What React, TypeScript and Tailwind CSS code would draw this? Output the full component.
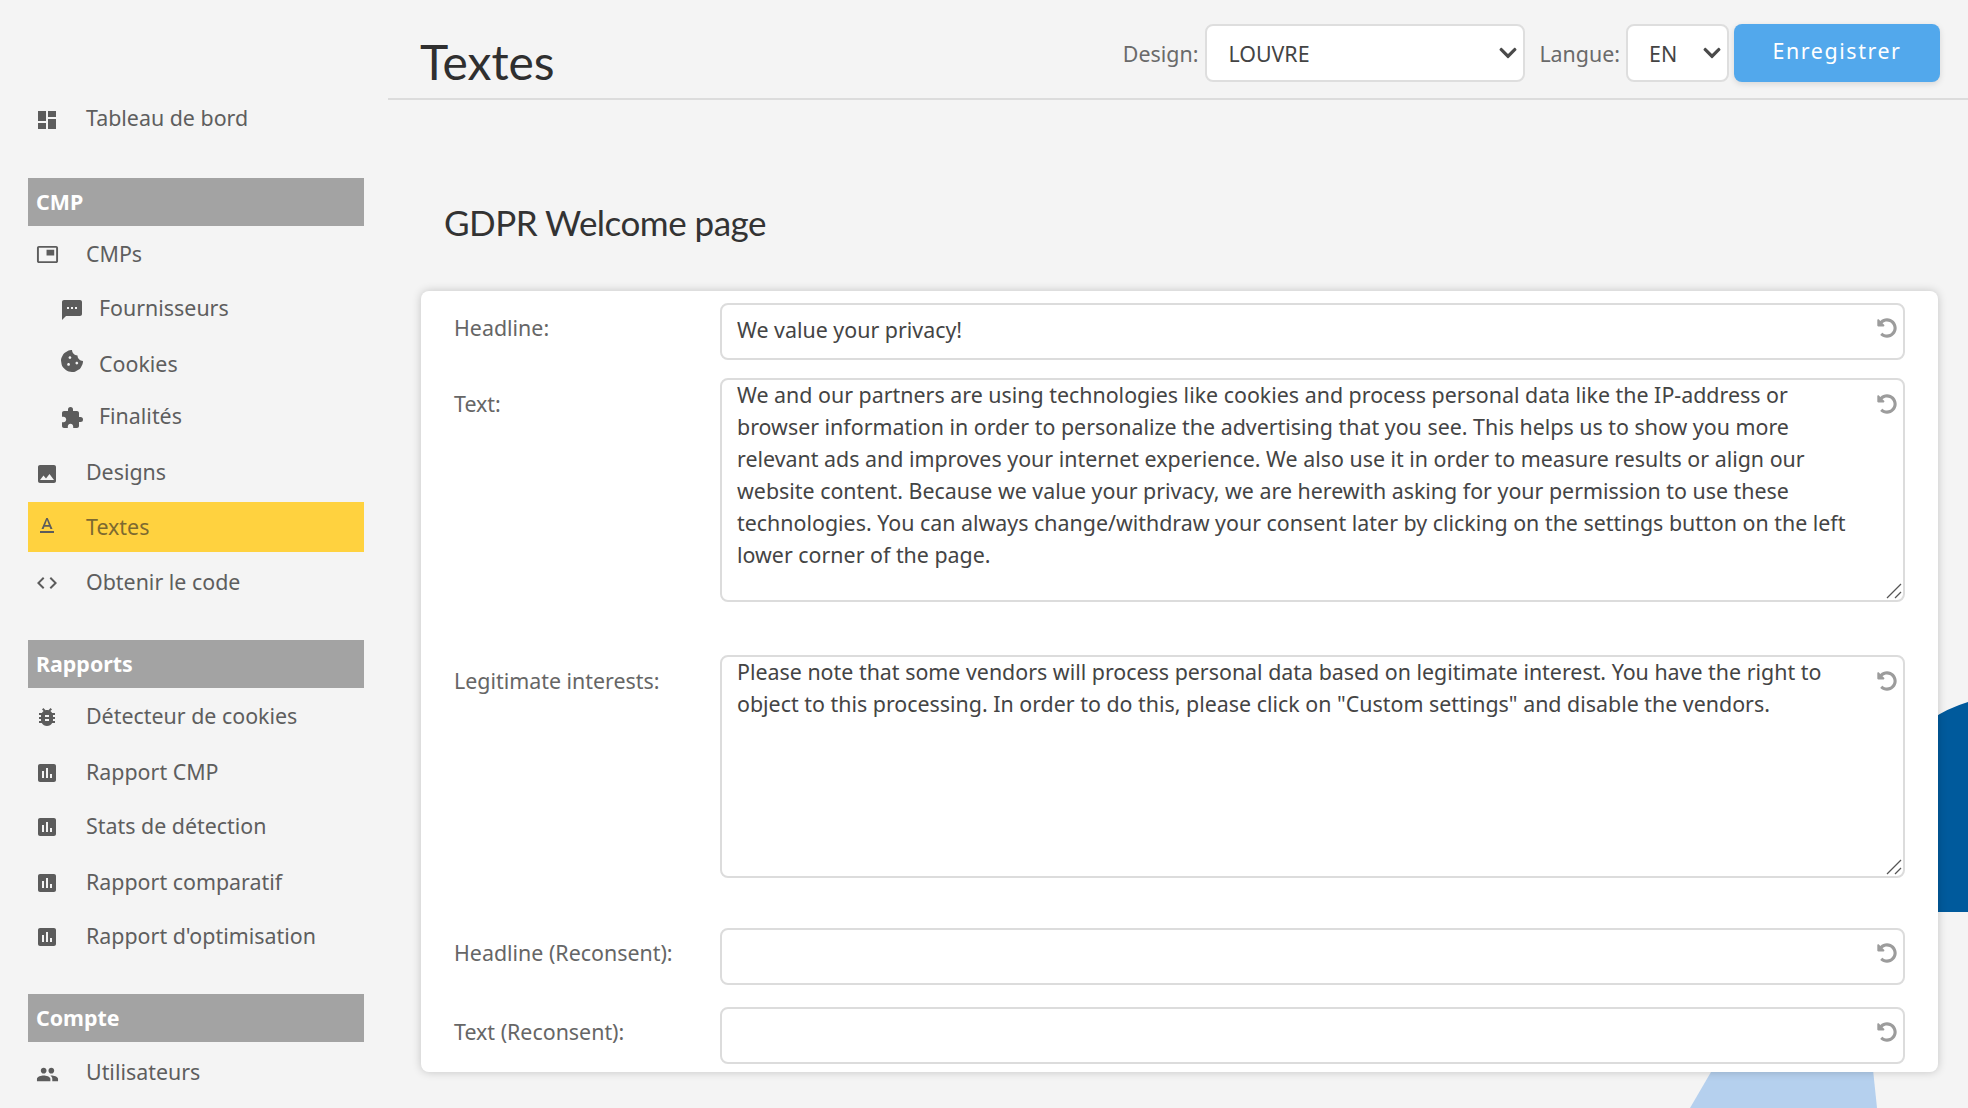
import React from 'react'
import { FaChevronDown, FaCookieBite, FaUndoAlt } from 'react-icons/fa'
import {
  MdAssessment,
  MdBugReport,
  MdCode,
  MdDashboard,
  MdExtension,
  MdImage,
  MdPeople,
  MdPictureInPicture,
  MdSms,
  MdTextFormat,
} from 'react-icons/md'

const TEXT_BODY =
  'We and our partners are using technologies like cookies and process personal data like the IP-address or browser information in order to personalize the advertising that you see. This helps us to show you more relevant ads and improves your internet experience. We also use it in order to measure results or align our website content. Because we value your privacy, we are herewith asking for your permission to use these technologies. You can always change/withdraw your consent later by clicking on the settings button on the left lower corner of the page.'
const LEGIT_BODY =
  'Please note that some vendors will process personal data based on legitimate interest. You have the right to object to this processing. In order to do this, please click on "Custom settings" and disable the vendors.'

function NavItem({ icon, label, sub, active, className }: { icon: React.ReactNode; label: string; sub?: boolean; active?: boolean; className?: string }) {
  return (
    <div className={`flex h-[50px] items-center ${active ? 'bg-[#ffd23f]' : ''} ${sub ? 'pl-[26px]' : 'pl-[6px]'} ${className ?? ''}`}>
      <span className={`flex items-center justify-center pt-[4px] text-[#5c5c5c] ${sub ? 'w-[35px]' : 'w-[26px]'}`}>{icon}</span>
      <span className={`text-[21.4px] ${sub ? 'ml-[10px]' : 'ml-[26px]'} ${active ? 'text-[#7d6a30]' : 'text-[#5e5e5e]'}`}>{label}</span>
    </div>
  )
}

function SectionHead({ label, className }: { label: string; className?: string }) {
  return <div className={`flex h-[48px] items-center bg-[#a3a3a3] pl-[8px] text-[21.4px] font-bold text-white ${className ?? ''}`}>{label}</div>
}

function Sidebar() {
  return (
    <aside className="w-[388px] shrink-0 pl-[28px] pr-[24px] pt-[93px]">
      <NavItem icon={<MdDashboard size={24} />} label="Tableau de bord" />
      <SectionHead label="CMP" className="mt-[35px]" />
      <NavItem icon={<MdPictureInPicture size={23} className="-mt-[3px]" />} label="CMPs" className="mt-[3px]" />
      <NavItem icon={<MdSms size={24} />} label="Fournisseurs" sub className="mt-[4px]" />
      <NavItem icon={<FaCookieBite size={22} className="-mt-[10px]" />} label="Cookies" sub className="mt-[6px]" />
      <NavItem icon={<MdExtension size={24} />} label="Finalités" sub className="mt-[2px]" />
      <NavItem icon={<MdImage size={24} />} label="Designs" className="mt-[6px]" />
      <NavItem icon={<MdTextFormat size={24} className="-mt-[6px]" />} label="Textes" active className="mt-[5px]" />
      <NavItem icon={<MdCode size={24} className="-mt-[3px]" />} label="Obtenir le code" className="mt-[5px]" />
      <SectionHead label="Rapports" className="mt-[33px]" />
      <NavItem icon={<MdBugReport size={24} className="-mt-[2px]" />} label="Détecteur de cookies" className="mt-[3px]" />
      <NavItem icon={<MdAssessment size={24} className="-mt-[2px]" />} label="Rapport CMP" className="mt-[6px]" />
      <NavItem icon={<MdAssessment size={24} className="-mt-[2px]" />} label="Stats de détection" className="mt-[4px]" />
      <NavItem icon={<MdAssessment size={24} className="-mt-[2px]" />} label="Rapport comparatif" className="mt-[6px]" />
      <NavItem icon={<MdAssessment size={24} className="-mt-[2px]" />} label="Rapport d'optimisation" className="mt-[4px]" />
      <SectionHead label="Compte" className="mt-[33px]" />
      <NavItem icon={<MdPeople size={23} />} label="Utilisateurs" className="mt-[5px]" />
    </aside>
  )
}

function Dropdown({ value, options, className }: { value: string; options: string[]; className: string }) {
  return (
    <div className={`relative h-[58px] ${className}`}>
      <select
        defaultValue={value}
        className="h-full w-full appearance-none rounded-[8px] border-2 border-[#dedede] bg-white pl-[21px] pt-[2px] text-[21.4px] text-[#444]"
      >
        {options.map((o) => (
          <option key={o}>{o}</option>
        ))}
      </select>
      <FaChevronDown size={20} className="pointer-events-none absolute right-[7px] top-[19px] text-[#4a4a4a]" />
    </div>
  )
}

function Field({ label, value, className }: { label: string; value?: string; className?: string }) {
  return (
    <div className={`flex ${className ?? ''}`}>
      <label className="w-[299px] shrink-0 pl-[33px] pt-[9px] text-[21.4px] leading-[32px] text-[#666]">{label}</label>
      <div className="relative flex-1">
        <input
          defaultValue={value}
          className="h-[57px] w-full rounded-[8px] border-2 border-[#dcdcdc] bg-white pb-[4px] pl-[15px] pr-[40px] text-[21.4px] text-[#444]"
        />
        <FaUndoAlt size={20} className="pointer-events-none absolute right-[8px] top-[15px] text-[#9c9c9c]" />
      </div>
    </div>
  )
}

function AreaField({ label, value, className, height }: { label: string; value: string; className?: string; height: string }) {
  return (
    <div className={`flex ${className ?? ''}`}>
      <label className="w-[299px] shrink-0 pl-[33px] pt-[10px] text-[21.4px] leading-[32px] text-[#666]">{label}</label>
      <div className={`relative flex-1 overflow-hidden rounded-[8px] border-2 border-[#dcdcdc] bg-white ${height}`}>
        <textarea
          defaultValue={value}
          className="-mt-[1px] block h-full w-full resize-none pl-[15px] pr-[36px] text-[21.4px] leading-[32px] text-[#444]"
        />
        <FaUndoAlt size={20} className="pointer-events-none absolute right-[6px] top-[14px] text-[#9c9c9c]" />
        <svg className="pointer-events-none absolute bottom-[1px] right-[1px]" width="16" height="16" viewBox="0 0 16 16" stroke="#555" strokeWidth="1.2">
          <line x1="1" y1="15" x2="15" y2="1" />
          <line x1="9" y1="15" x2="15" y2="9" />
        </svg>
      </div>
    </div>
  )
}

export default function App() {
  return (
    <div className="relative flex h-[1108px] overflow-hidden bg-[#f4f4f4] [font-family:'Noto_Sans',sans-serif]">
      <svg className="absolute left-[1930px] top-[702px]" width="38" height="210" viewBox="0 0 38 210">
        <path d="M0 18 Q18 6 38 0 V210 H0 Z" fill="#005a9c" />
      </svg>
      <svg className="absolute left-[1680px] top-[1060px]" width="210" height="48" viewBox="0 0 210 48">
        <polygon points="38,0 192,0 197,48 10,48" fill="#b5d0ee" />
      </svg>
      <Sidebar />
      <main className="relative min-w-0 flex-1">
        <header className="flex h-[100px] items-center border-b-2 border-[#dcdcdc] pl-[32px] pr-[28px] pt-[8px]">
          <h1 className="mt-[18px] text-[48px] leading-[60px] text-[#2f2f2f] [font-family:'Lato',sans-serif]">Textes</h1>
          <div className="ml-auto flex items-center">
            <span className="mr-[7px] mt-[2px] text-[21.4px] text-[#6a6a6a]">Design:</span>
            <Dropdown value="LOUVRE" options={['LOUVRE']} className="w-[320px]" />
            <span className="ml-[14px] mr-[6px] mt-[2px] text-[21.4px] text-[#6a6a6a]">Langue:</span>
            <Dropdown value="EN" options={['EN']} className="w-[103px]" />
            <button className="ml-[5px] h-[58px] w-[206px] rounded-[8px] bg-[#52a8ec] pb-[3px] text-[21.4px] tracking-[1.6px] text-white shadow-[0_2px_6px_rgba(0,0,0,0.12)]">
              Enregistrer
            </button>
          </div>
        </header>
        <h2 className="mt-[92px] pl-[56px] text-[35px] leading-[60px] tracking-[-0.5px] text-[#333] [font-family:'Lato',sans-serif]">GDPR Welcome page</h2>
        <section className="relative ml-[33px] mt-[39px] h-[781px] w-[1517px] rounded-[8px] bg-white pr-[33px] pt-[12px] shadow-[0_0_10px_rgba(0,0,0,0.2)]">
          <Field label="Headline:" value="We value your privacy!" />
          <AreaField label="Text:" value={TEXT_BODY} className="mt-[18px]" height="h-[224px]" />
          <AreaField label="Legitimate interests:" value={LEGIT_BODY} className="mt-[53px]" height="h-[223px]" />
          <Field label="Headline (Reconsent):" className="mt-[50px]" />
          <Field label="Text (Reconsent):" className="mt-[22px]" />
        </section>
      </main>
    </div>
  )
}
